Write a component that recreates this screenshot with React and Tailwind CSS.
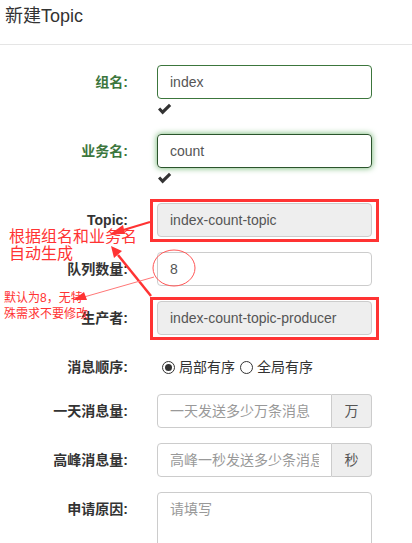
import React from 'react';

const font = { fontFamily: '"Liberation Sans", "Noto Sans CJK SC", sans-serif' };

// bold check mark used under valid fields
const Check = () => (
  <div className="h-[35px] pt-[4px]">
    <svg width="15" height="12" viewBox="0 0 15 12" className="block">
      <path d="M1 6.5 L3.2 4.6 L5.6 7 L12 0.8 L14.2 3 L5.6 11.4 Z" fill="#333" />
    </svg>
  </div>
);

const Row = ({ label, green, children, className = '' }) => (
  <div className={`flex ${className}`}>
    <label
      className={`w-[128px] shrink-0 h-[34px] flex items-center justify-end text-[14px] font-bold ${
        green ? 'text-[#3c763d]' : 'text-[#333]'
      }`}
    >
      {label}
    </label>
    <div className="ml-[29px] w-[215px]">{children}</div>
  </div>
);

const inputCls =
  'block w-full h-[34px] px-[12px] text-[14px] text-[#555] rounded-[4px] border outline-none placeholder:text-[#999]';

const App = () => {
  return (
    <div className="relative w-[412px] h-[543px] overflow-hidden bg-white" style={font}>
      {/* Header */}
      <div className="h-[45px] border-b border-[#e5e5e5] px-[5px] pt-[4px]">
        <h4 className="text-[18px] text-[#333] leading-[24px]">新建Topic</h4>
      </div>

      <div className="pt-[20px]">
        <Row label="组名:" green>
          <input className={`${inputCls} border-[#3c763d]`} defaultValue="index" />
          <Check />
        </Row>

        <Row label="业务名:" green>
          <input
            className={`${inputCls} border-[#2b542c] shadow-[0_0_6px_#67b168]`}
            defaultValue="count"
          />
          <Check />
        </Row>

        <Row label="Topic:">
          <div className="relative">
            <input
              readOnly
              className={`${inputCls} border-[#ccc] bg-[#eee]`}
              defaultValue="index-count-topic"
            />
            <div className="absolute -left-[7px] -right-[7px] -top-[4px] -bottom-[5px] border-[3px] border-[#f33]" />
          </div>
        </Row>

        <Row label="队列数量:" className="mt-[15px]">
          <input className={`${inputCls} border-[#ccc]`} defaultValue="8" />
        </Row>

        <Row label="生产者:" className="mt-[15px]">
          <div className="relative">
            <input
              readOnly
              className={`${inputCls} border-[#ccc] bg-[#eee]`}
              defaultValue="index-count-topic-producer"
            />
            <div className="absolute -left-[7px] -right-[7px] -top-[4px] -bottom-[5px] border-[3px] border-[#f33]" />
          </div>
        </Row>

        <div className="flex mt-[15px] h-[29px] pt-[6px]">
          <label className="w-[128px] shrink-0 flex items-center justify-end text-[14px] font-bold text-[#333]">
            消息顺序:
          </label>
          <div className="ml-[34px] flex items-center text-[14px] text-[#333]">
            <span className="w-[13px] h-[13px] rounded-full border border-[#333] flex items-center justify-center">
              <span className="w-[7px] h-[7px] rounded-full bg-[#333]" />
            </span>
            <span className="ml-[4px]">局部有序</span>
            <span className="ml-[5px] w-[13px] h-[13px] rounded-full border border-[#333]" />
            <span className="ml-[4px]">全局有序</span>
          </div>
        </div>

        <Row label="一天消息量:" className="mt-[15px]">
          <div className="flex h-[34px]">
            <input
              className="block min-w-0 flex-1 h-[34px] px-[12px] text-[14px] text-[#555] rounded-l-[4px] border border-[#ccc] outline-none placeholder:text-[#999]"
              placeholder="一天发送多少万条消息"
            />
            <span className="w-[40px] flex items-center justify-center text-[14px] text-[#555] bg-[#eee] border border-l-0 border-[#ccc] rounded-r-[4px]">
              万
            </span>
          </div>
        </Row>

        <Row label="高峰消息量:" className="mt-[15px]">
          <div className="flex h-[34px]">
            <input
              className="block min-w-0 flex-1 h-[34px] px-[12px] text-[14px] text-[#555] rounded-l-[4px] border border-[#ccc] outline-none placeholder:text-[#999]"
              placeholder="高峰一秒发送多少条消息"
            />
            <span className="w-[40px] flex items-center justify-center text-[14px] text-[#555] bg-[#eee] border border-l-0 border-[#ccc] rounded-r-[4px]">
              秒
            </span>
          </div>
        </Row>

        <Row label="申请原因:" className="mt-[15px]">
          <textarea
            className="block w-full h-[80px] px-[12px] py-[6px] text-[14px] text-[#555] rounded-[4px] border border-[#ccc] outline-none resize-none placeholder:text-[#999]"
            placeholder="请填写"
          />
        </Row>
      </div>

      {/* annotations drawn over the form */}
      <div className="absolute left-[9px] top-[228px] text-[16px] leading-[17px] text-[#f33] pointer-events-none">
        <div>根据组名和业务名</div>
        <div>自动生成</div>
      </div>
      <div className="absolute left-[4px] top-[290px] text-[12px] leading-[16px] text-[#f33] pointer-events-none">
        <div>默认为8，无特</div>
        <div>殊需求不要修改</div>
      </div>

      <svg
        className="absolute left-0 top-0 pointer-events-none"
        width="412"
        height="543"
        viewBox="0 0 412 543"
      >
        <ellipse cx="174" cy="268" rx="21" ry="18" fill="none" stroke="#f55" strokeWidth="1" />
        {/* arrow to topic text */}
        <line x1="150" y1="222" x2="120" y2="231" stroke="#f33" strokeWidth="2" />
        <polygon points="110,234 123,225 125,234" fill="#f33" />
        {/* arrow from producer box */}
        <line x1="151" y1="296" x2="118" y2="255" stroke="#f33" strokeWidth="2.5" />
        <polygon points="111,246 122,251 114,258" fill="#f33" />
        {/* arrow from circle */}
        <line x1="154" y1="277" x2="84" y2="297" stroke="#f77" strokeWidth="1" />
        <polygon points="73,300 84,292 87,300" fill="#f33" />
      </svg>
    </div>
  );
};

export default App;
